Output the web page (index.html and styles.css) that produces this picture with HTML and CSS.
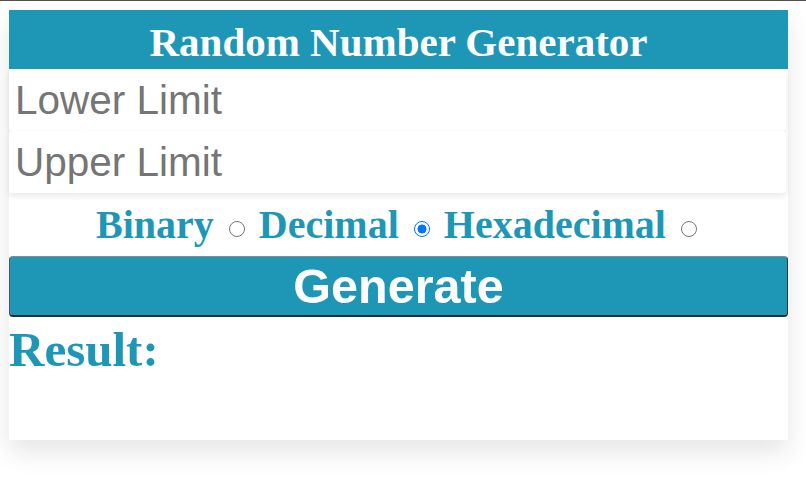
FILE: index.html
```html
<!DOCTYPE html>
<html lang="en">
<head>
<meta charset="utf-8">
<title>Random Number Generator</title>
<link rel="stylesheet" href="styles.css">
</head>
<body>
<div class="card">
  <div class="header">Random Number Generator</div>
  <input class="field" type="text" placeholder="Lower Limit">
  <input class="field" type="text" placeholder="Upper Limit">
  <div class="options">
    <label class="opt">Binary <input type="radio" name="base" value="bin"></label>
    <label class="opt">Decimal <input type="radio" name="base" value="dec" checked></label>
    <label class="opt">Hexadecimal <input type="radio" name="base" value="hex"></label>
  </div>
  <button class="generate" type="button">Generate</button>
  <div class="result">Result:</div>
</div>
</body>
</html>
```
FILE: styles.css
```css
html, body {
  margin: 0;
  background: #ffffff;
}
body {
  border-top: 1px solid #4f4f4f;
  padding: 9px 0 44px 9px;
}
.card {
  width: 779px;
  height: 430px;
  background: #ffffff;
  box-shadow: 0 12px 24px rgba(0, 0, 0, 0.1);
  display: flex;
  flex-direction: column;
}
.header {
  background: #1e97b6;
  color: #ffffff;
  font-family: "Liberation Serif", "Times New Roman", serif;
  font-weight: bold;
  font-size: 41px;
  line-height: 46px;
  text-align: center;
  padding: 9px 0 4px;
}
.field {
  display: block;
  box-sizing: border-box;
  width: 777px;
  height: 62px;
  margin: 0;
  border: none;
  border-radius: 4px;
  box-shadow: 0 3px 6px rgba(0, 0, 0, 0.09);
  padding: 0 6px;
  font-family: "Liberation Sans", Arial, sans-serif;
  font-size: 40.5px;
  color: #333333;
  background: #ffffff;
  outline: none;
}
.field::placeholder {
  color: #757575;
}
.options {
  font-family: "Liberation Serif", "Times New Roman", serif;
  font-weight: bold;
  font-size: 40px;
  line-height: 46px;
  color: #1e97b6;
  text-align: center;
  padding: 9px 0 8px;
}
.opt input {
  -webkit-appearance: none;
  appearance: none;
  box-sizing: border-box;
  width: 16px;
  height: 16px;
  margin: 0 4px 0 5px;
  border: 1.5px solid #767676;
  border-radius: 50%;
  background: #ffffff;
  vertical-align: 1px;
}
.opt input:checked {
  border: 1.5px solid #0075ff;
  background: radial-gradient(circle, #0075ff 0 4.2px, #ffffff 4.8px);
}
.generate {
  display: block;
  box-sizing: border-box;
  width: 779px;
  height: 61px;
  margin: 0;
  padding: 0;
  background: #1e97b6;
  color: #ffffff;
  font-family: "Liberation Sans", Arial, sans-serif;
  font-weight: bold;
  font-size: 48.5px;
  border: 1px solid;
  border-color: #8a8a8a #2a3b42 #1a2e36 #4a5a60;
  border-bottom-width: 2px;
  border-radius: 4px;
}
.result {
  font-family: "Liberation Serif", "Times New Roman", serif;
  font-weight: bold;
  font-size: 49px;
  line-height: 55px;
  color: #1e97b6;
  margin-top: 5px;
}
```
